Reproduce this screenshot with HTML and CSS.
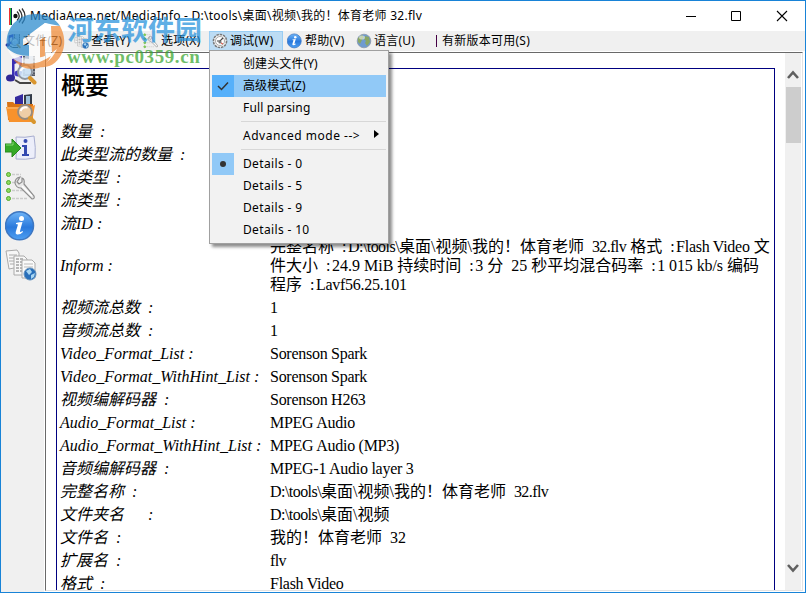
FILE: index.html
```
<!DOCTYPE html>
<html lang="zh-CN">
<head>
    <meta charset="UTF-8">
    <title>MediaArea.net/MediaInfo</title>
    <link rel="stylesheet" href="styles.css">
</head>
<body>
<div class="window">

    <header class="titlebar">
        <svg class="app-icon" width="17" height="17" viewBox="0 0 17 17">
            <path d="M.5 0v17" stroke="#e33"/><path d="M1.5 0v17" stroke="#2b3"/><path d="M2.5 0v17" stroke="#135"/>
            <circle cx="6.500" cy="8" r="2.200" fill="#111"/>
            <path d="M8 3.500Q12.500 8 8 12.500M10 1.500Q16 8 10 14.500M13 .5Q19 8 13 15.500" fill="none" stroke="#333" stroke-width="1.300"/>
        </svg>
        <span class="title">MediaArea.net/MediaInfo - D:\tools\桌面\视频\我的！体育老师 32.flv</span>
        <svg class="controls" width="105" height="12" viewBox="0 0 105 12">
            <path d="M0 6.500h10M45.500 1.500h9v9h-9z" fill="none" stroke="#000"/>
            <path d="M91 1l10 10M101 1L91 11" stroke="#000" stroke-width="1.100"/>
        </svg>
    </header>

    <nav class="menubar">
        <div class="menu-item m-file">
            <svg width="16" height="16" viewBox="0 0 32 32"><use href="#i-media"/></svg><span>文件(Z)</span>
        </div>
        <div class="menu-item m-view">
            <svg width="16" height="16" viewBox="0 0 32 32"><use href="#i-pages"/></svg><span>查看(Y)</span>
        </div>
        <div class="menu-item m-opts">
            <svg width="16" height="16" viewBox="0 0 32 32"><use href="#i-tools"/></svg><span>选项(X)</span>
        </div>
        <div class="menu-item m-debug active">
            <svg width="16" height="16" viewBox="0 0 16 16">
                <circle cx="8" cy="8" r="6.600" fill="#eee" stroke="#777" stroke-width="1.500" stroke-dasharray="2.500 .9"/>
                <circle cx="8" cy="8" r="4.500" fill="#fff" stroke="#aaa"/>
                <path d="M5 8h3l3-3" fill="none" stroke="#444" stroke-width="1.200"/><circle cx="8" cy="9" r="1.600" fill="#777"/><path d="M9 10l2 1" stroke="#d43"/>
            </svg><span>调试(W)</span>
        </div>
        <div class="menu-item m-help">
            <svg width="16" height="16" viewBox="0 0 32 32"><use href="#i-info"/></svg><span>帮助(V)</span>
        </div>
        <div class="menu-item m-lang">
            <svg width="16" height="16" viewBox="0 0 16 16">
                <circle cx="8" cy="8" r="6.800" fill="#6f9bd0" stroke="#8a98a8" stroke-width=".8"/>
                <path d="M2 5l4-3 2 2-2 3-2 4-2-2zM9 3l4 1 1 5-3 4-2-3 1-2-2-2z" fill="#8aa765"/>
                <ellipse cx="6" cy="4.500" rx="3" ry="2" fill="#fff" opacity=".5"/>
            </svg><span>语言(U)</span>
        </div>
        <div class="menu-item m-new"><i class="bar"></i><span>有新版本可用(S)</span></div>
    </nav>

    <div class="main">
        <aside class="toolbar">
            <svg width="32" height="32" viewBox="0 0 32 32">
                <g id="i-media">
                    <path d="M18 2h12v20H18z" fill="#555a66"/><path d="M20 2h8v18h-8z" fill="#b9c6d8"/>
                    <path d="M19 3v18M29 3v18" stroke="#ddd" stroke-dasharray="1.500 2"/>
                    <path d="M7 5l10-3v17h-2.500V8L9.500 10v14H7z" fill="#3a2fb4"/>
                    <ellipse cx="5.500" cy="24" rx="4.500" ry="3.500" fill="#2f2796"/><ellipse cx="13" cy="19.500" rx="3.500" ry="3" fill="#4338c0"/>
                    <path d="M10 26l5 3 11 0" stroke="#444" stroke-width="2" fill="none"/>
                    <circle cx="20" cy="18" r="7" fill="#cfe4f7" fill-opacity=".9" stroke="#8d959e" stroke-width="1.800"/>
                    <path d="M15.500 17q2-4.500 7-3.500" stroke="#fff" stroke-width="2" fill="none"/>
                    <path d="M25 24l4.500 4.500" stroke="#d9962e" stroke-width="4" stroke-linecap="round"/>
                </g>
            </svg>
            <svg width="32" height="32" viewBox="0 0 32 32">
                <path d="M10 4l8-3v12h-8z" fill="#352b9e"/><path d="M19 2l8-1v14h-8z" fill="#333b48"/><path d="M21 3h4v10h-4z" fill="#9cc0dc"/>
                <path d="M2 9h6l2 2h18v16H3z" fill="#d97415"/>
                <path d="M1 14h24l5-2-3 17H4z" fill="#f7922c"/><path d="M2 15h22" stroke="#ffc27b"/>
                <circle cx="20" cy="19" r="7" fill="#edd8bd" fill-opacity=".85" stroke="#958b80" stroke-width="1.800"/>
                <path d="M15.500 18q2-4.500 7-3.500" stroke="#fff" stroke-width="2" fill="none"/>
                <path d="M25 25l4 4" stroke="#d9962e" stroke-width="4" stroke-linecap="round"/>
            </svg>
            <svg width="32" height="32" viewBox="0 0 32 32">
                <path d="M11 5q9 1 18-1 2 12 1 22-10 2-19 1 1-11 0-22z" fill="#eceefa" stroke="#a8aed0"/>
                <circle cx="20.500" cy="9" r="2" fill="#3349b0"/>
                <path d="M17 13h5v9h2v2h-7v-2h2v-7h-2z" fill="#3349b0"/>
                <path d="M0 12h7V7l9 9-9 9v-5H0z" fill="#36a928" stroke="#26891c"/><path d="M1 13h7v-3" stroke="#82dc70" fill="none"/>
            </svg>
            <svg width="32" height="32" viewBox="0 0 32 32">
                <g id="i-tools">
                    <g stroke="#ccc" stroke-width="1.500" stroke-dasharray="3 1"><path d="M7 3.500h9M7 11.500h8M7 19.500h11M7 27.500h15"/></g>
                    <g fill="#8ddb5d" stroke="#54a82d"><circle cx="3.500" cy="3.500" r="2"/><circle cx="3.500" cy="11.500" r="2"/><circle cx="3.500" cy="19.500" r="2"/><circle cx="3.500" cy="27.500" r="2"/></g>
                    <path d="M15 6q-5 1-5 6 1 5 6 5l11 11q3 0 2-3L19 13q1-5-2-6v4l-3 2-2-2z" fill="#e9e9e9" stroke="#8e8e8e" stroke-width="1.200"/>
                    <path d="M17 15l10 10" stroke="#fff" stroke-width="1.500"/>
                </g>
            </svg>
            <svg width="32" height="32" viewBox="0 0 32 32">
                <defs>
                    <linearGradient id="blue" x1="0" y1="0" x2="0" y2="1">
                        <stop offset="0" stop-color="#6eb4f7"/><stop offset=".55" stop-color="#2a79dc"/><stop offset="1" stop-color="#4fa0f2"/>
                    </linearGradient>
                </defs>
                <g id="i-info">
                    <circle cx="14.500" cy="15.800" r="14" fill="url(#blue)" stroke="#3e77c1" stroke-width="1.500"/>
                    <circle cx="16.500" cy="8.500" r="2.500" fill="#fff"/>
                    <path d="M11 13q3-1 6.500-1l-2.500 9q-.5 2 2.500 0l.5 1q-3 3-6 2.500-2-.5-1-3.500l2-6.500-2-.5z" fill="#fff"/>
                </g>
            </svg>
            <svg width="32" height="32" viewBox="0 0 32 32">
                <g id="i-pages">
                    <path d="M1 2l11-1 2 3v14l-10 2z" fill="#f7f7f7" stroke="#aaa"/><path d="M4 6h8M4 9h8M4 12h7M5 15h6" stroke="#aaa"/>
                    <path d="M9 7h10l3 3v16H9z" fill="#f7f7f7" stroke="#aaa"/><path d="M11 10h8M11 13h9M11 16h9M11 19h9M11 22h9" stroke="#777" stroke-dasharray="3 1"/>
                    <path d="M17 11h10l3 3v15H17z" fill="#fafafa" stroke="#aaa"/><path d="M19 15h9M19 18h9" stroke="#bbb"/>
                    <circle cx="25" cy="25" r="6" fill="#286fba" stroke="#6693bd"/><path d="M21 22l4-2 2 3-3 3zM26 26l4-2-1 4-3 2z" fill="#a9d6f2"/>
                </g>
            </svg>
        </aside>

        <section class="view">
            <div class="report">
                <h2>概要</h2>
                <table>
                    <tr><td>数量&nbsp;&nbsp;:</td><td></td></tr>
                    <tr><td>此类型流的数量&nbsp;&nbsp;:</td><td></td></tr>
                    <tr><td>流类型&nbsp;&nbsp;:</td><td></td></tr>
                    <tr><td>流类型&nbsp;&nbsp;:</td><td></td></tr>
                    <tr><td>流ID :</td><td></td></tr>
                    <tr class="inform"><td>Inform :</td><td>完整名称&nbsp;&nbsp;<b>:</b><span class="path">D:\tools\</span>桌面\视频\我的！体育老师&nbsp; <span class="file">32.flv</span> 格式&nbsp;&nbsp;<b>:</b><span class="en">Flash Video</span> 文<br>件大小&nbsp;&nbsp;<b>:</b>24.9 MiB 持续时间&nbsp;&nbsp;<b>:</b>3 分&nbsp; 25 秒平均混合码率&nbsp;&nbsp;<b>:</b><span class="kbs">1 015 kb/s</span> 编码<br>程序&nbsp;&nbsp;<b>:</b><span class="en">Lavf56.25.101</span></td></tr>
                    <tr><td>视频流总数&nbsp;&nbsp;:</td><td>1</td></tr>
                    <tr><td>音频流总数&nbsp;&nbsp;:</td><td>1</td></tr>
                    <tr><td>Video_Format_List :</td><td class="en">Sorenson Spark</td></tr>
                    <tr><td>Video_Format_WithHint_List :</td><td class="en">Sorenson Spark</td></tr>
                    <tr><td>视频编解码器&nbsp;&nbsp;:</td><td class="en">Sorenson H263</td></tr>
                    <tr><td>Audio_Format_List :</td><td class="en">MPEG Audio</td></tr>
                    <tr><td>Audio_Format_WithHint_List :</td><td class="en">MPEG Audio (MP3)</td></tr>
                    <tr><td>音频编解码器&nbsp;&nbsp;:</td><td class="en">MPEG-1 Audio layer 3</td></tr>
                    <tr><td>完整名称&nbsp;&nbsp;:</td><td><span class="path">D:\tools\</span>桌面\视频\我的！体育老师&nbsp; <span class="file">32.flv</span></td></tr>
                    <tr><td>文件夹名&nbsp;&nbsp;&nbsp;&nbsp;&nbsp;&nbsp;:</td><td><span class="path">D:\tools\</span>桌面\视频</td></tr>
                    <tr><td>文件名&nbsp;&nbsp;:</td><td>我的！体育老师&nbsp; 32</td></tr>
                    <tr><td>扩展名&nbsp;&nbsp;:</td><td class="file">flv</td></tr>
                    <tr><td>格式&nbsp;&nbsp;:</td><td class="en">Flash Video</td></tr>
                </table>
            </div>
            <div class="scrollbar">
                <svg width="12" height="10" viewBox="0 0 12 10"><path d="M1 8l5-5.500L11 8" fill="none" stroke="#606060" stroke-width="2.600"/></svg>
                <div class="thumb"></div>
                <svg class="down" width="12" height="10" viewBox="0 0 12 10"><path d="M1 2l5 5.500L11 2" fill="none" stroke="#606060" stroke-width="2.600"/></svg>
            </div>
        </section>
    </div>

    <!-- download site mark -->
    <div class="watermark">
        <svg width="62" height="58" viewBox="0 0 62 58">
            <path d="M2 35C-1 14 14 1 31 1c11 0 20 5 24 12L40 10 18 26v6h7v11C15 43 7 40 2 35z" fill="#2788cc"/>
            <path d="M46 13l9 0c5 9 6 20 1 29-5 10-14 13-22 12 8-5 11-9 13-15z" fill="#f08a35"/>
            <path d="M18 27L40 10l6 2v30l-8 3V27l-3 1v20l-11-2V30z" fill="#fff"/>
            <path d="M35 27l5-3v20l-5 2z" fill="#f08a35"/>
            <path d="M2 35q12 14 30 10 12-2 20-9-8 17-24 18Q10 54 2 35z" fill="#fff"/>
            <path d="M8 46q18 11 38-3-5 12-18 13-13 0-20-10z" fill="#f08a35"/>
        </svg>
        <div class="mark-text">
            <span class="mark-name">河东软件园</span>
            <span class="mark-url">www.pc0359.cn</span>
        </div>
    </div>

    <div class="dropdown">
        <div class="option cn"><i></i><span>创建头文件(Y)</span></div>
        <div class="option cn selected">
            <i><svg width="12" height="10" viewBox="0 0 12 10"><path d="M1 5l3.500 3.500L11 1.500" fill="none" stroke="#333" stroke-width="1.500"/></svg></i>
            <span>高级模式(Z)</span>
        </div>
        <div class="option"><i></i><span class="full">Full parsing</span></div>
        <hr>
        <div class="option"><i></i><span class="adv">Advanced mode --&gt;</span><svg class="sub" width="5" height="8" viewBox="0 0 5 8"><path d="M0 0l5 4-5 4z"/></svg></div>
        <hr>
        <div class="option radio"><i><svg width="8" height="8" viewBox="0 0 8 8"><circle cx="4" cy="4" r="3" fill="#333"/></svg></i><span>Details - 0</span></div>
        <div class="option"><i></i><span>Details - 5</span></div>
        <div class="option"><i></i><span>Details - 9</span></div>
        <div class="option"><i></i><span>Details - 10</span></div>
    </div>

</div>
</body>
</html>
```
FILE: styles.css
```
* { box-sizing: border-box; }

body { margin: 0; font-family: 'Noto Sans', 'Noto Sans CJK SC', sans-serif; font-size: 12px; color: #000; }

.window { position: relative; width: 806px; height: 593px; border: 1px solid #1883d7; background: #fff; display: flex; flex-direction: column; overflow: hidden; }
svg { display: block; flex-shrink: 0; }

/* TITLE BAR */
.titlebar { height: 30px; display: flex; align-items: center; padding-left: 8px; flex-shrink: 0; }
.title { margin-left: 4px; line-height: 18px; letter-spacing: 0.26px; white-space: nowrap; }
.controls { margin: 0 14px 0 auto; }

/* MENU BAR */
.menubar { height: 20px; background: #f0f0f0; display: flex; flex-shrink: 0; }
.menu-item { display: flex; align-items: center; gap: 2px; height: 20px; padding-left: 4px; line-height: 18px; letter-spacing: 0.25px; white-space: nowrap; }
.m-file { width: 68px; }
.m-view { width: 70px; }
.m-opts { width: 70px; }
.m-debug { width: 74px; }
.m-help { width: 68px; }
.m-lang { width: 81px; padding-left: 5px; }
.active { background: #bcdcf4; border: 1px solid #99cdf3; padding-left: 2px; }
.bar { width: 1px; height: 12px; background: #404; margin-right: 3px; }
.m-new span { margin-top: -1px; }

/* MAIN */
.main { flex: 1; display: flex; min-height: 0; background: #fff; }
.toolbar { width: 43px; background: #f0f0f0; padding: 3px 0 0 4px; display: flex; flex-direction: column; gap: 7px; }
.view { flex: 1; margin: 1px 2px 1px 1px; border: 1px solid #696969; border-right-color: #e3e3e3; border-bottom-color: #e3e3e3; display: flex; overflow: hidden; }
.report { width: 719px; height: 700px; margin: 15px 10px 0 10px; border: 1px solid #000080; padding: 2px 2px 0; flex-shrink: 0; font-family: 'Liberation Serif', 'Noto Sans CJK SC', serif; font-size: 16px; }
h2 { margin: 0; padding-left: 2px; height: 49px; line-height: 30px; font-size: 24px; font-weight: 500; }
table { border-spacing: 0; table-layout: fixed; width: 711px; }
tr { height: 23px; }
td { padding: 0 0 0 1px; height: 23px; line-height: 19px; white-space: nowrap; vertical-align: middle; }
td:first-child { width: 210px; font-style: italic; padding-left: 1px; }
td b { font-weight: 400; margin-right: 1.5px; }
.inform, .inform td { height: 61px; }
.en { letter-spacing: -0.27px; }
.path { letter-spacing: -0.55px; }
.file { letter-spacing: -0.6px; }
.kbs { letter-spacing: -0.1px; }

/* SCROLLBAR */
.scrollbar { width: 16px; background: #f0f0f0; padding: 17px 1px 0; display: flex; flex-direction: column; align-items: center; }
.thumb { width: 15px; height: 56px; margin-top: 7px; background: #cdcdcd; }
.down { margin: auto 0 17px; }

/* DROPDOWN */
.dropdown { position: absolute; left: 208px; top: 49px; width: 180px; height: 194px; border: 1px solid #a0a0a0; background: #f2f2f2; padding: 2px; box-shadow: 3px 3px 3px rgba(0,0,0,0.45); }
.option { height: 22px; display: flex; align-items: center; line-height: 22px; letter-spacing: 0.35px; white-space: nowrap; }
.option i { width: 22px; height: 22px; margin-right: 9px; display: flex; align-items: center; justify-content: center; }
.cn { letter-spacing: 0.1px; }
.full { letter-spacing: 0.15px; }
.adv { letter-spacing: 0.5px; }
.selected { background: #91c9f7; }
.selected i { background: #56b0fa; }
.radio i { background: #91c9f7; }
.sub { margin: -4px 7px 0 auto; }
hr { height: 1px; margin: 2px 0 3px 29px; border: 0; background: #d7d7d7; }

/* WATERMARK */
.watermark { position: absolute; left: 4px; top: 12px; display: flex; opacity: 0.72; }
.mark-text { display: flex; flex-direction: column; margin-top: 1px; }
.mark-name { font-family: 'Noto Sans CJK SC', sans-serif; font-size: 27px; font-weight: 700; line-height: 30px; color: #2491dc; }
.mark-url { margin-top: 2px; font-family: 'Liberation Serif', serif; font-size: 19px; font-weight: 700; line-height: 22px; letter-spacing: 0.6px; color: #38a52f; }
```
